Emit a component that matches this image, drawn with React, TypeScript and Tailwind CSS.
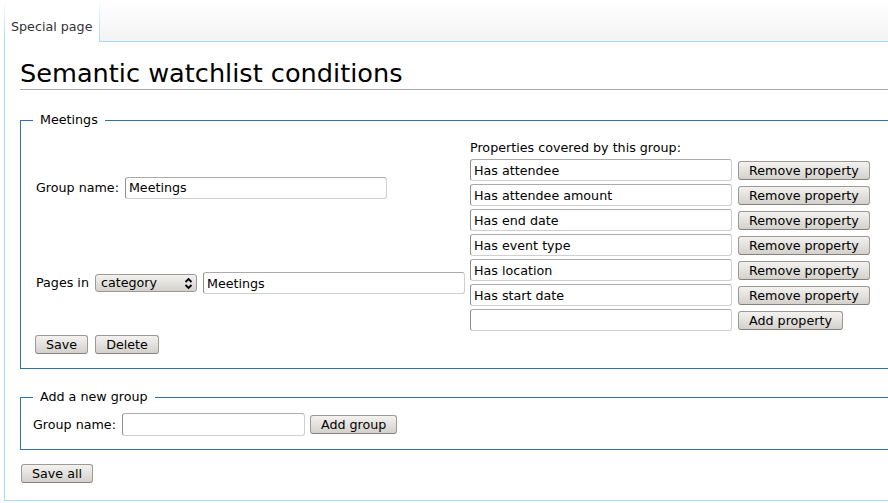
import React from "react";

const INPUT =
  "h-[22px] rounded-[3px] border border-[#cfcfcf] border-t-[#ababab] border-l-[#8f8f8f] bg-white px-[3px] text-[12.7px] leading-[20px] text-black outline-none";

const BTN =
  "h-[19px] shrink-0 rounded-[3px] border border-[#9d9a96] border-b-[#85827e] bg-linear-to-b from-[#f3f2f0] to-[#d4d1cc] px-[10px] text-[12.7px] leading-[17px] text-black";

const properties = [
  "Has attendee",
  "Has attendee amount",
  "Has end date",
  "Has event type",
  "Has location",
  "Has start date",
];

function Field({ value, width }: { value: string; width: string }) {
  return <input readOnly defaultValue={value} className={`${INPUT} ${width}`} />;
}

function SelectBox() {
  return (
    <div className="ml-[6px] flex h-[18px] w-[102px] items-center justify-between rounded-[3px] border border-[#9d9a96] bg-linear-to-b from-[#f3f2f0] to-[#d4d1cc] pl-[5px] pr-[3px] leading-[16px]">
      <span>category</span>
      <svg width="9" height="13" viewBox="0 0 9 13" className="text-black">
        <path d="M1.5 5 L4.5 2 L7.5 5" fill="none" stroke="currentColor" strokeWidth="1.8" />
        <path d="M1.5 8 L4.5 11 L7.5 8" fill="none" stroke="currentColor" strokeWidth="1.8" />
      </svg>
    </div>
  );
}

export default function App() {
  return (
    <div className="h-[503px] w-[888px] overflow-hidden bg-white font-['DejaVu_Sans',sans-serif] text-[12.7px] leading-[16px] text-black">
      <div className="w-[1000px]">
        {/* tab bar */}
        <div className="flex h-[42px]">
          <div className="w-[4px]" />
          <div className="w-px bg-linear-to-b from-white to-[#a7d7f9]" />
          <div className="w-[94px] bg-white pl-[6px] pt-[19px] text-[#333]">Special page</div>
          <div className="w-px bg-linear-to-b from-white via-[#cfe6f7] to-[#a7d7f9]" />
          <div className="flex-1 border-b border-[#a7d7f9] bg-linear-to-b from-white to-[#f3f3f3]" />
        </div>

        <main className="ml-[4px] h-[459px] border-b border-l border-[#a7d7f9] pl-[15px] pt-[16px]">
          <h1 className="border-b border-[#aaa] text-[25.6px] leading-[31px] font-normal">
            Semantic watchlist conditions
          </h1>

          <fieldset className="mt-[22px] border border-[#2f6fab] px-[12px] pb-[14px] pt-[12px]">
            <legend className="px-[7px] leading-[16px]">Meetings</legend>
            <div className="flex">
              <div className="flex w-[434px] flex-col">
                <div className="flex flex-1 items-center pl-[3px]">
                  <span>Group name:</span>
                  <Field value="Meetings" width="ml-[6px] w-[262px]" />
                </div>
                <div className="flex flex-1 items-center pl-[3px]">
                  <span>Pages in</span>
                  <SelectBox />
                  <Field value="Meetings" width="ml-[6px] w-[262px]" />
                </div>
              </div>
              <div className="flex flex-col pl-[3px]">
                <div className="leading-[16px]">Properties covered by this group:</div>
                <div className="mt-[3px] flex flex-col gap-[3px]">
                  {properties.map((p) => (
                    <div key={p} className="flex items-center">
                      <Field value={p} width="w-[262px]" />
                      <button className={`${BTN} ml-[6px] px-[9px]`}>Remove property</button>
                    </div>
                  ))}
                  <div className="flex items-center">
                    <Field value="" width="w-[262px]" />
                    <button className={`${BTN} ml-[6px]`}>Add property</button>
                  </div>
                </div>
              </div>
            </div>
            <div className="mt-[4px] flex gap-[7px] pl-[2px]">
              <button className={BTN}>Save</button>
              <button className={BTN}>Delete</button>
            </div>
          </fieldset>

          <fieldset className="mt-[20px] border border-[#2f6fab] px-[12px] pb-[13px] pt-[8px]">
            <legend className="px-[7px] leading-[16px]">Add a new group</legend>
            <div className="flex items-center">
              <span>Group name:</span>
              <Field value="" width="ml-[6px] h-[23px] w-[183px]" />
              <button className={`${BTN} ml-[5px]`}>Add group</button>
            </div>
          </fieldset>

          <button className={`${BTN} ml-px mt-[14px]`}>Save all</button>
        </main>
      </div>
    </div>
  );
}
